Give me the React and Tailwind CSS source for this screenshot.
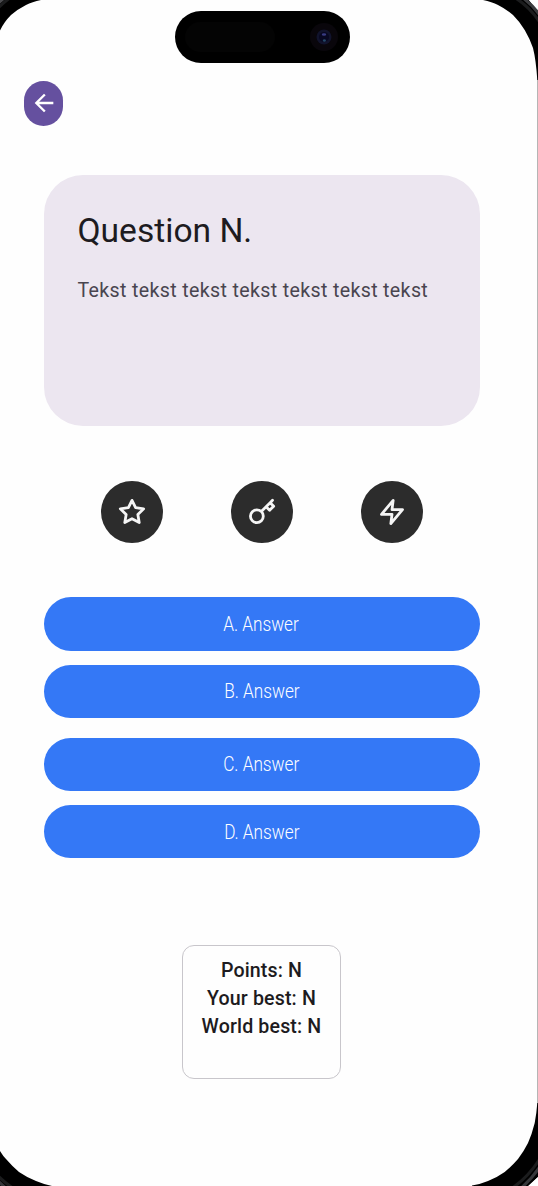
import React from "react";

const answers = [
  { label: "A. Answer", gap: "" },
  { label: "B. Answer", gap: "mt-[14px]" },
  { label: "C. Answer", gap: "mt-5" },
  { label: "D. Answer", gap: "mt-[14px]" },
];

function RoundIcon({ children }) {
  return (
    <button className="flex size-[62px] items-center justify-center rounded-full bg-[#2c2c2c]">
      <svg viewBox="0 0 20 20" className="size-7" fill="none" stroke="#f5f5f5" strokeWidth="2" strokeLinecap="round" strokeLinejoin="round">
        {children}
      </svg>
    </button>
  );
}

function PhoneFrame() {
  return (
    <svg className="pointer-events-none absolute inset-0" width="538" height="1186" viewBox="0 0 538 1186" fill="none">
      <path stroke="#b5b5b5" d="M537.5 0V1186" />
      <path fill="#000" d="M483 0C489 1 494 3 498 5Q506 9 513 15Q520 22 524.7 30Q530 39 533 48Q536 60 537.3 80H538V13L529 0Z" />
      <path fill="#000" d="M41 0C35 1 30 3 26 5Q18 9 11 15Q4 22 0 30.5V0Z" />
      <path fill="#000" d="M472 1185.5Q481 1184 488 1181Q497 1177.5 504.7 1172Q512 1166 518 1159Q524 1151 528 1143Q532 1134 534.7 1123Q536.6 1113 537.3 1103H538V1177L529 1186H472Z" />
      <path fill="#000" d="M52 1186Q43 1184 36 1181Q27 1177.5 19 1172Q12 1166 6 1159Q3 1156 0 1151V1186Z" />
      <g strokeWidth="3">
        <path stroke="#1b1c1d" d="M510 -5Q528 4 541 24" />
        <path stroke="#3b3c3f" d="M517 -6Q532 3 541 17" />
        <path stroke="#1b1c1d" d="M14 -5Q5 1 -3 9" />
        <path stroke="#4b4c4f" d="M9 -6Q4 -2 -3 4" />
        <path stroke="#1b1c1d" d="M506 1192Q527 1180 541 1157" />
        <path stroke="#36373a" d="M515 1193Q531 1181 541 1165" />
        <path stroke="#1b1c1d" d="M16 1190Q6 1184 -3 1175" />
        <path stroke="#36373a" d="M11 1192Q4 1187 -3 1180" />
      </g>
      <path fill="#fff" d="M529 0Q534 4 538 10V0ZM528 1186L538 1177V1186Z" />
    </svg>
  );
}

export default function App() {
  return (
    <main className="relative h-[1186px] w-[538px] overflow-hidden bg-[#fefefe] font-['Roboto',sans-serif] text-[#1d1b20]">
      <PhoneFrame />
      <div className="relative flex flex-col">
        <div className="ml-[175.3px] mt-[11.3px] flex h-[51.7px] w-[175px] items-center justify-between rounded-full bg-black pl-[10px] pr-3">
          <div className="h-[30px] w-[90px] rounded-full bg-[#040404]" />
          <svg className="size-7" viewBox="0 0 28 28">
            <circle cx="14" cy="14" r="14" fill="#09060b" />
            <circle cx="14" cy="14" r="7.5" fill="#11132c" />
            <circle cx="14" cy="14" r="5" fill="#080822" />
            <ellipse cx="14" cy="11.5" rx="2.2" ry="1.3" fill="#383b82" />
            <ellipse cx="14.4" cy="17.5" rx="1.5" ry="1.2" fill="#254967" />
          </svg>
        </div>
        <button className="ml-[24.3px] mt-[18px] flex h-[45px] w-[39px] items-center justify-center rounded-full bg-[#65509f] pb-px">
          <svg viewBox="0 0 24 24" className="size-[28px]" fill="#fff">
            <path d="M7.825 13L13.425 18.6L12 20L4 12L12 4L13.425 5.4L7.825 11H20V13Z" />
          </svg>
        </button>
        <section className="ml-[43.8px] mt-[49px] h-[251.5px] w-[436.7px] rounded-[39px] bg-[#ece6f0] px-[33.7px] pt-[33px]">
          <h1 className="text-[33.6px] leading-[45px]">Question N.</h1>
          <p className="mt-6 text-[19.6px] leading-7 tracking-[0.35px] text-[#49454f]">Tekst tekst tekst tekst tekst tekst tekst</p>
        </section>
        <div className="ml-[101px] mt-[54.5px] flex gap-[68.2px]">
          <RoundIcon>
            <path d="M10 1.67L12.58 6.88L18.33 7.72L14.17 11.78L15.15 17.5L10 14.8L4.85 17.5L5.83 11.78L1.67 7.72L7.42 6.88Z" />
          </RoundIcon>
          <RoundIcon>
            <path d="M17.5 1.67L15.83 3.33M9.49 9.68A4.58 4.58 0 1 1 3.01 16.15A4.58 4.58 0 0 1 9.49 9.68ZM9.49 9.68L12.92 6.25M15.83 3.33L18.33 5.83L15.42 8.75L12.92 6.25M15.83 3.33L12.92 6.25" />
          </RoundIcon>
          <RoundIcon>
            <path d="M10.83 1.67L2.5 11.67H10L9.17 18.33L17.5 8.33H10Z" />
          </RoundIcon>
        </div>
        <div className="ml-[43.8px] mt-[54.4px] flex w-[436.7px] flex-col">
          {answers.map(({ label, gap }) => (
            <button key={label} className={`${gap} flex h-[53.2px] items-center justify-center rounded-full bg-[#3478f6] text-[20px] font-light text-white`}>
              <span className="-ml-[1.5px] scale-x-[0.86]">{label}</span>
            </button>
          ))}
        </div>
        <section className="ml-[182px] mt-[86.6px] h-[134px] w-[159px] rounded-[12px] border-[1.5px] border-[#c8c6cb] pt-[11.5px] text-center text-[19.6px] font-medium leading-7 tracking-[0.14px]">
          <p>Points: N</p>
          <p>Your best: N</p>
          <p>World best: N</p>
        </section>
      </div>
    </main>
  );
}
